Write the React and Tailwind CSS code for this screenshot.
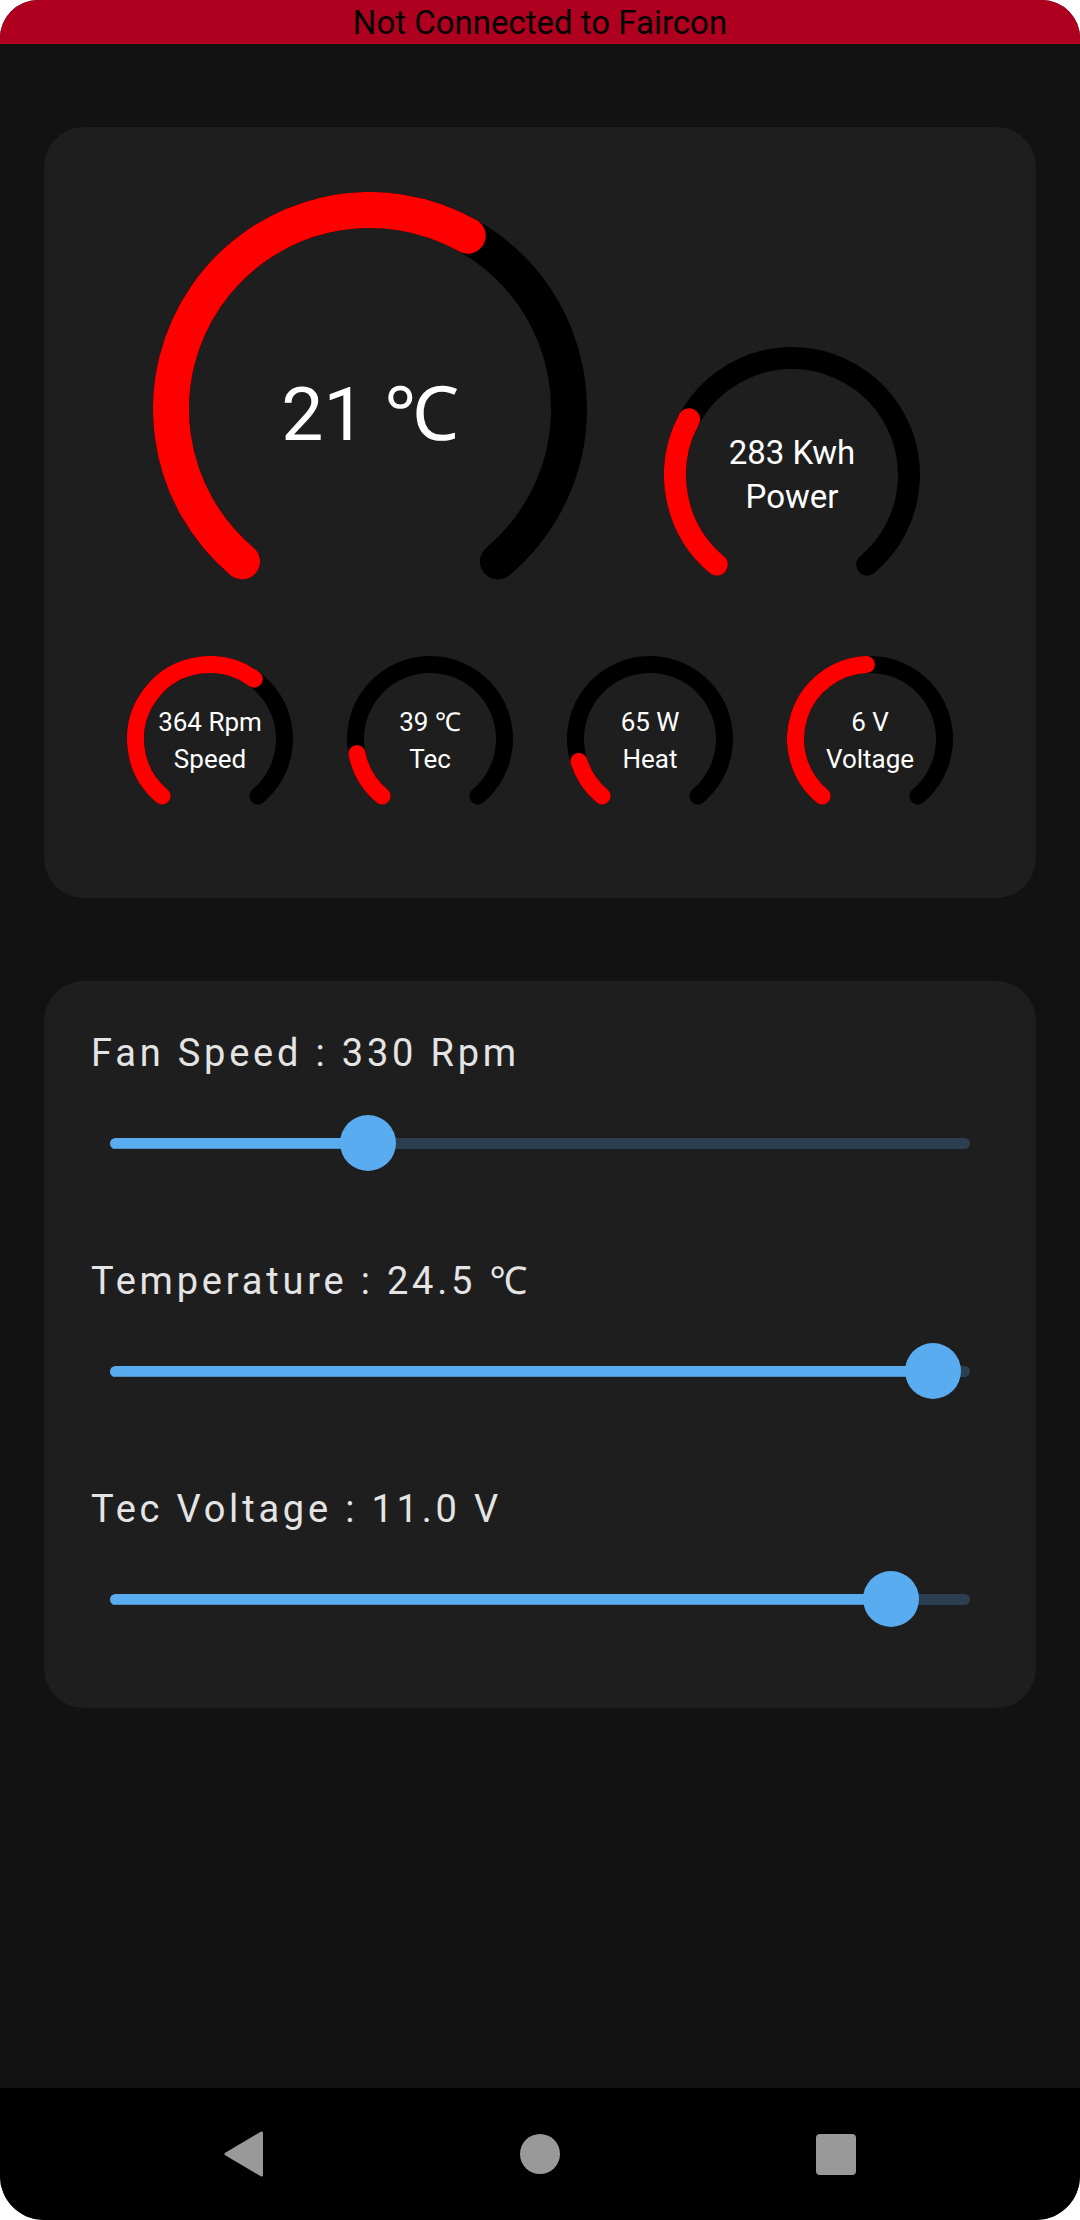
import React from "react";

const START = 130;
const SWEEP = 280;

function pt(cx, cy, r, a) {
  const t = (a * Math.PI) / 180;
  return [cx + r * Math.cos(t), cy + r * Math.sin(t)];
}

function arc(cx, cy, r, a0, a1) {
  const [x0, y0] = pt(cx, cy, r, a0);
  const [x1, y1] = pt(cx, cy, r, a1);
  const large = a1 - a0 > 180 ? 1 : 0;
  return `M ${x0} ${y0} A ${r} ${r} 0 ${large} 1 ${x1} ${y1}`;
}

function Gauge({ size, stroke, frac, boxClass, children }) {
  const c = size / 2;
  const r = c - stroke / 2;
  return (
    <div className={`grid ${boxClass}`}>
      <svg
        width={size}
        height={size}
        viewBox={`0 0 ${size} ${size}`}
        className="col-start-1 row-start-1"
      >
        <path
          d={arc(c, c, r, START, START + SWEEP)}
          fill="none"
          stroke="#000000"
          strokeWidth={stroke}
          strokeLinecap="round"
        />
        <path
          d={arc(c, c, r, START, START + SWEEP * frac)}
          fill="none"
          stroke="#ff0000"
          strokeWidth={stroke}
          strokeLinecap="round"
        />
      </svg>
      <div className="col-start-1 row-start-1 place-self-center text-center text-white">
        {children}
      </div>
    </div>
  );
}

function Slider({ label, value }) {
  return (
    <div className="flex flex-col">
      <div className="text-[38px] leading-[44px] tracking-[3.8px] text-[#e4e4e4]">
        {label}
      </div>
      <div className="relative mx-[19px] mt-[40px] h-[56px] flex items-center">
        <div className="flex h-[11px] w-full overflow-hidden rounded-full">
          <div
            className="h-full bg-[#5aacf0] border-b border-[#4a8ec6]"
            style={{ width: `${value * 100}%` }}
          />
          <div className="h-full flex-1 bg-[#2c3f51]" />
        </div>
        <div
          className="absolute top-0 h-[56px] w-[56px] -translate-x-1/2 rounded-full bg-[#5aacf0]"
          style={{ left: `${value * 100}%` }}
        />
      </div>
    </div>
  );
}

export default function App() {
  const font = { fontFamily: 'Roboto, "Noto Sans", "Liberation Sans", sans-serif' };
  return (
    <div
      className="w-[1080px] h-[2220px] flex flex-col overflow-hidden rounded-t-[38px] rounded-b-[44px] bg-[#121212]"
      style={font}
    >
      {/* banner */}
      <div className="h-[44px] shrink-0 bg-[#b00020] text-center text-[33px] leading-[44px] text-black pt-[1px]">
        Not Connected to Faircon
      </div>

      {/* content */}
      <div className="flex-1 flex flex-col gap-[83px] px-[44px] pt-[83px]">
        {/* gauges card */}
        <div className="h-[771px] rounded-[40px] bg-[#1e1e1e] pt-[65px] flex flex-col">
          <div className="flex items-start pl-[109px]">
            <Gauge size={434} stroke={36} frac={0.605} boxClass="w-[434px] h-[434px]">
              <div className="text-[75px] leading-none translate-y-[5px]">21 ℃</div>
            </Gauge>
            <div className="ml-[77px] mt-[155px]">
              <Gauge size={256} stroke={22} frac={0.28} boxClass="w-[256px] h-[256px]">
                <div className="text-[33px] leading-[44px]">
                  <div>283 Kwh</div>
                  <div>Power</div>
                </div>
              </Gauge>
            </div>
          </div>
          <div className="mt-[30px] flex gap-[54px] pl-[83px]">
            <Gauge size={166} stroke={17} frac={0.63} boxClass="w-[166px] h-[166px]">
              <div className="text-[26px] leading-[37px] translate-y-[2px]">
                <div>364 Rpm</div>
                <div>Speed</div>
              </div>
            </Gauge>
            <Gauge size={166} stroke={17} frac={0.138} boxClass="w-[166px] h-[166px]">
              <div className="text-[26px] leading-[37px] translate-y-[2px]">
                <div>39 ℃</div>
                <div>Tec</div>
              </div>
            </Gauge>
            <Gauge size={166} stroke={17} frac={0.116} boxClass="w-[166px] h-[166px]">
              <div className="text-[26px] leading-[37px] translate-y-[2px]">
                <div>65 W</div>
                <div>Heat</div>
              </div>
            </Gauge>
            <Gauge size={166} stroke={17} frac={0.49} boxClass="w-[166px] h-[166px]">
              <div className="text-[26px] leading-[37px] translate-y-[2px]">
                <div>6 V</div>
                <div>Voltage</div>
              </div>
            </Gauge>
          </div>
        </div>

        {/* sliders card */}
        <div className="h-[727px] rounded-[40px] bg-[#1e1e1e] px-[47px] pt-[50px] flex flex-col gap-[88px]">
          <Slider label="Fan Speed : 330 Rpm" value={0.3} />
          <Slider label="Temperature : 24.5 ℃" value={0.957} />
          <Slider label="Tec Voltage : 11.0 V" value={0.908} />
        </div>
      </div>

      {/* nav bar */}
      <div className="h-[132px] shrink-0 bg-black flex items-center justify-center gap-[256px]">
        <svg width="40" height="46" viewBox="0 0 40 46">
          <path
            d="M37.5 2 L37.5 44 L2 23 Z"
            fill="#999999"
            stroke="#999999"
            strokeWidth="3"
            strokeLinejoin="round"
          />
        </svg>
        <div className="w-[40px] h-[40px] rounded-full bg-[#999999]" />
        <div className="w-[40px] h-[41px] rounded-[4px] bg-[#999999]" />
      </div>
    </div>
  );
}
